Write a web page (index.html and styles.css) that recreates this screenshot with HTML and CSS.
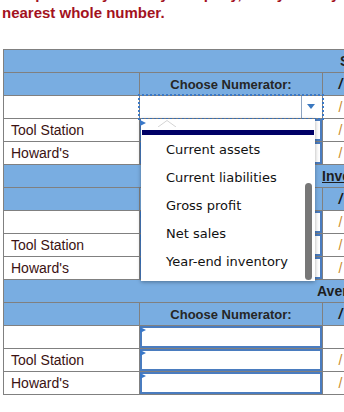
FILE: index.html
```html
<!DOCTYPE html>
<html>
<head>
<meta charset="utf-8">
<title>Inventory ratios</title>
<link rel="stylesheet" href="styles.css">
</head>
<body>
<p class="prompt">Compute every ratio by company, and your days by inventory to the<br>nearest whole number.</p>

<div class="sheet">
<table class="ratios">
  <colgroup>
    <col class="c-name"><col class="c-num"><col class="c-slash"><col class="c-den">
  </colgroup>
  <tr class="head"><th colspan="4" class="title t-one">S</th></tr>
  <tr class="sub"><th></th><th>Choose Numerator:</th><th class="slash">/</th><th>Choose Denominator:</th></tr>
  <tr>
    <td></td>
    <td class="pick"><div class="select"><span class="arrow"></span></div></td>
    <td class="slash">/</td><td></td>
  </tr>
  <tr>
    <td class="name">Tool Station</td>
    <td class="box"><i class="flag over"></i><div class="field"></div></td>
    <td class="slash">/</td><td></td>
  </tr>
  <tr>
    <td class="name">Howard's</td>
    <td class="box"><i class="flag"></i><div class="field"></div></td>
    <td class="slash">/</td><td></td>
  </tr>

  <tr class="head"><th colspan="4" class="title t-two"><u>Inventory</u></th></tr>
  <tr class="sub"><th></th><th>Choose Numerator:</th><th class="slash">/</th><th>Choose Denominator:</th></tr>
  <tr>
    <td></td>
    <td class="box"><i class="flag"></i><div class="field"></div></td>
    <td class="slash">/</td><td></td>
  </tr>
  <tr>
    <td class="name">Tool Station</td>
    <td class="box"><i class="flag"></i><div class="field"></div></td>
    <td class="slash">/</td><td></td>
  </tr>
  <tr>
    <td class="name">Howard's</td>
    <td class="box"><i class="flag"></i><div class="field"></div></td>
    <td class="slash">/</td><td></td>
  </tr>

  <tr class="head"><th colspan="4" class="title t-three">Average</th></tr>
  <tr class="sub"><th></th><th>Choose Numerator:</th><th class="slash">/</th><th>Choose Denominator:</th></tr>
  <tr>
    <td></td>
    <td class="box"><i class="flag"></i><div class="field"></div></td>
    <td></td><td></td>
  </tr>
  <tr>
    <td class="name">Tool Station</td>
    <td class="box"><i class="flag"></i><div class="field"></div></td>
    <td class="slash">/</td><td></td>
  </tr>
  <tr>
    <td class="name">Howard's</td>
    <td class="box"><i class="flag"></i><div class="field"></div></td>
    <td class="slash">/</td><td></td>
  </tr>
</table>

<!-- open list of the focused select -->
<div class="popup">
  <svg class="tip" width="18" height="7" viewBox="0 0 18 7"><polyline points="0,7 9,0.5 18,7" fill="#fff" stroke="#d4d4d4" stroke-width="1"/></svg>
  <div class="bar"></div>
  <ul class="options">
    <li>Current assets</li>
    <li>Current liabilities</li>
    <li>Gross profit</li>
    <li>Net sales</li>
    <li>Year-end inventory</li>
  </ul>
  <div class="thumb"></div>
</div>
</div>
</body>
</html>
```

FILE: styles.css
```css
html, body {
    margin: 0;
    background: #fff;
    overflow: hidden;
}
body {
    font-family: "Liberation Sans", Arial, sans-serif;
    color: #222;
}
.prompt {
    margin: -16px 0 0 0;
    padding-left: 2px;
    font-size: 15px;
    font-weight: bold;
    line-height: 19px;
    color: #a3121e;
    white-space: nowrap;
}
.sheet {
    position: relative;
    margin: 27px 0 0 3px;
    width: 560px;
}
.ratios {
    border-collapse: collapse;
    table-layout: fixed;
    width: 556px;
    border: 1px solid #808080;
}
.c-name { width: 136px; }
.c-num { width: 183px; }
.c-slash { width: 36px; }
.c-den { width: 201px; }

.ratios th, .ratios td {
    border: 1px solid #808080;
    height: 22px;
    padding: 0;
    font-size: 14px;
}
.head th, .sub th {
    background: #79ade1;
}
.head th {
    border-left: none;
    border-right: none;
}
.title {
    text-align: left;
    font-weight: bold;
    color: #1e1e1e;
    white-space: nowrap;
}
.t-one { padding-left: 336px !important; }
.t-two { padding-left: 318px !important; }
.t-three { padding-left: 313px !important; }
.sub th {
    font-size: 13px;
    font-weight: bold;
    color: #262626;
    text-align: center;
}
.sub th.slash {
    font-size: 14px;
    font-style: italic;
    color: #1a1a1a;
}
td.name {
    padding-left: 7px;
    color: #3b1212;
}
td.slash {
    text-align: center;
    color: #c88a2c;
}
td.box, td.pick {
    position: relative;
}
.field {
    height: 22px;
    box-sizing: border-box;
    border: 2px solid #4a7cbf;
    background: #fff;
}
.flag {
    position: absolute;
    left: 0;
    top: 1px;
    width: 0;
    height: 0;
    border-left: 6px solid #3a78c8;
    border-top: 3px solid transparent;
    border-bottom: 3px solid transparent;
}
.flag.over {
    z-index: 2;
}
.select {
    height: 22px;
    background: #fff;
    outline: 2px dotted #3b78c5;
    outline-offset: 0;
    display: flex;
    justify-content: flex-end;
}
.arrow {
    width: 20px;
    border-left: 1px solid #8da4c2;
    position: relative;
}
.arrow::after {
    content: "";
    position: absolute;
    left: 5px;
    top: 8px;
    border-top: 5px solid #3a78c0;
    border-left: 4px solid transparent;
    border-right: 4px solid transparent;
}

.popup {
    position: absolute;
    left: 138px;
    top: 70px;
    width: 174px;
    height: 162px;
    background: #fff;
    box-shadow: 0 1px 4px rgba(0, 0, 0, 0.35);
    z-index: 1;
    padding-top: 11px;
    box-sizing: border-box;
}
.tip {
    position: absolute;
    left: 17px;
    top: 1px;
}
.bar {
    height: 5px;
    margin: 0 1px;
    background: #000066;
}
.options {
    list-style: none;
    margin: 0;
    padding: 1px 0 0 25px;
    font-family: "DejaVu Sans", Verdana, sans-serif;
    font-size: 13px;
    color: #111;
}
.options li {
    height: 28px;
    line-height: 28px;
}
.thumb {
    position: absolute;
    right: 3px;
    top: 64px;
    width: 7px;
    height: 97px;
    border-radius: 4px;
    background: #777;
}
```
